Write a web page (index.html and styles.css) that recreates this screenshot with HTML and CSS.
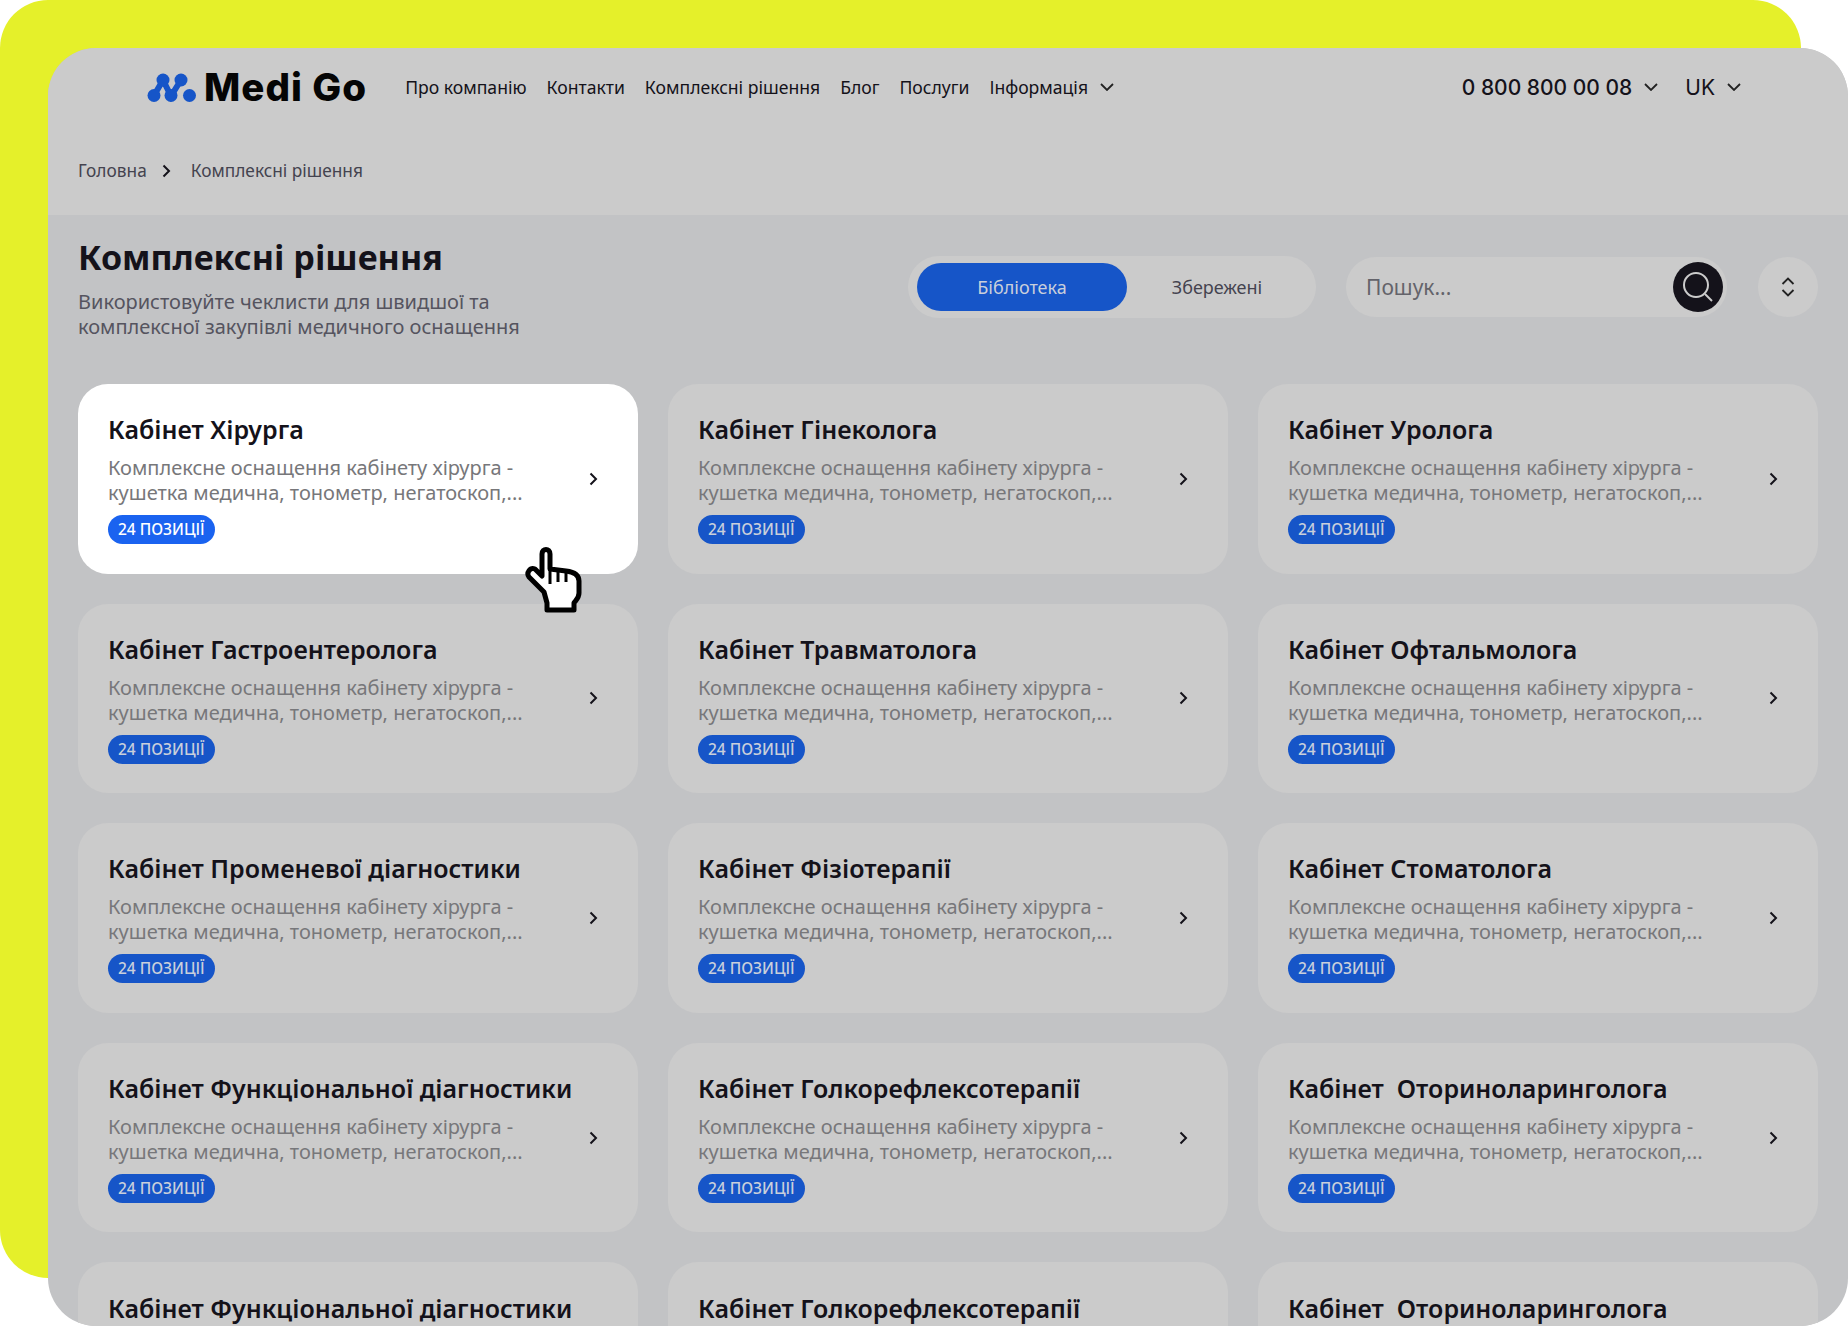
FILE: index.html
```html
<!DOCTYPE html>
<html lang="uk">
  <head>
    <meta charset="utf-8" />
    <title>Комплексні рішення</title>
    <link rel="stylesheet" href="styles.css">
  </head>
  <body>
    <div class="backdrop"></div>
    <div class="window">
      <div class="top">
        <header class="header">
          <a class="logo">
            <svg class="logo-mark" width="49" height="29" viewBox="0 0 49 29">
              <path d="M7 22.500L16 7 L24 23 L34 7" />
              <circle cx="16" cy="7" r="6.500" />
              <circle cx="7" cy="22.500" r="6.500" />
              <circle cx="24" cy="22.500" r="6.500" />
              <circle cx="34" cy="7" r="6.500" />
              <circle cx="42.500" cy="22.500" r="6.500" />
            </svg>
            <span class="logo-text">Medi Go</span>
          </a>
          <nav class="nav">
            <a>Про компанію</a>
            <a>Контакти</a>
            <a>Комплексні рішення</a>
            <a>Блог</a>
            <a>Послуги</a>
            <a class="with-arrow">Інформація
              <svg class="arrow" width="14" height="8" viewBox="0 0 14 8"><path d="M1 1l6 6 6-6" /></svg>
            </a>
          </nav>
          <div class="header-right">
            <a class="with-arrow phone">0 800 800 00 08
              <svg class="arrow" width="14" height="8" viewBox="0 0 14 8"><path d="M1 1l6 6 6-6" /></svg>
            </a>
            <a class="with-arrow lang">UK
              <svg class="arrow" width="14" height="8" viewBox="0 0 14 8"><path d="M1 1l6 6 6-6" /></svg>
            </a>
          </div>
        </header>
        <div class="crumbs">
          <a>Головна</a>
          <svg class="crumb-sep" width="9" height="14" viewBox="0 0 9 14"><path d="M1.500 1.500l5.500 5.500-5.500 5.500" /></svg>
          <a>Комплексні рішення</a>
        </div>
      </div>

      <main class="content">
        <div class="page-head">
          <div class="page-title">
            <h1>Комплексні рішення</h1>
            <p>Використовуйте чеклисти для швидшої та<br>комплексної закупівлі медичного оснащення</p>
          </div>
          <div class="tabs">
            <button class="tab active">Бібліотека</button>
            <button class="tab">Збережені</button>
          </div>
          <div class="search">
            <span class="search-text">Пошук...</span>
            <button class="search-btn">
              <svg width="32" height="32" viewBox="0 0 32 32"><circle cx="14" cy="14" r="12" /><path d="M23 23l7 7" /></svg>
            </button>
          </div>
          <button class="sort">
            <svg width="14" height="20" viewBox="0 0 14 20"><path d="M1.500 7l5.500-5.500 5.500 5.500M1.500 13l5.500 5.500 5.500-5.500" /></svg>
          </button>
        </div>

        <div class="cards" id="cards"></div>
      </main>
    </div>

    <svg class="cursor" width="58" height="66" viewBox="0 0 58 66">
      <path d="M19 45 L4 30 C1 26 5 20 10 22 L17 29 L17 7 C17 1 25 1 25 7 L25 22 L41 24 C50 25 54 28 54 34 L54 46 C54 51 51 53 49 56 L49 63 L22 63 L22 56 Z" />
      <path class="cursor-lines" d="M33 24v11M41 25v10M25 22v15" />
    </svg>

    <script src="cards.js"></script>
  </body>
</html>
```

FILE: cards.js
```js
const titles = [
  "Кабінет Хірурга",
  "Кабінет Гінеколога",
  "Кабінет Уролога",
  "Кабінет Гастроентеролога",
  "Кабінет Травматолога",
  "Кабінет Офтальмолога",
  "Кабінет Променевої діагностики",
  "Кабінет Фізіотерапії",
  "Кабінет Стоматолога",
  "Кабінет Функціональної діагностики",
  "Кабінет Голкорефлексотерапії",
  "Кабінет  Оториноларинголога",
  "Кабінет Функціональної діагностики",
  "Кабінет Голкорефлексотерапії",
  "Кабінет  Оториноларинголога",
];

const list = document.getElementById("cards");

titles.forEach(function (title, i) {
  const card = document.createElement("a");
  card.className = i === 0 ? "card hover" : "card";
  card.innerHTML = `
    <div class="card-body">
      <h3>${title}</h3>
      <p>Комплексне оснащення кабінету хірурга -<br>кушетка медична, тонометр, негатоскоп,...</p>
      <span class="badge">24 позиції</span>
    </div>
    <svg class="card-arrow" width="9" height="14" viewBox="0 0 9 14"><path d="M1.500 1.500l5.500 5.500-5.500 5.500" /></svg>`;
  list.appendChild(card);
});
```

FILE: styles.css
```css
* {
  box-sizing: border-box;
}
html, body {
  height: 100%;
}
body {
  margin: 0;
  background: #fff;
  font-family: "Noto Sans", Arial, sans-serif;
  color: #14121a;
  overflow: hidden;
  position: relative;
}
a {
  color: inherit;
  text-decoration: none;
}
button {
  font-family: inherit;
  border: none;
  padding: 0;
  background: none;
}
.backdrop {
  position: absolute;
  left: 0;
  top: 0;
  width: 1801px;
  height: 1278px;
  background: #e5f02a;
  border-radius: 48px;
}
.window {
  position: relative;
  margin: 48px 0 0 48px;
  width: 1800px;
  height: 1278px;
  background: #c2c3c5;
  border-radius: 48px;
  overflow: hidden;
}
.top {
  height: 167px;
  background: #cbcbcb;
}
.header {
  display: flex;
  align-items: center;
  height: 78px;
  padding: 0 107px 0 99px;
  font-size: 17.600px;
}
.logo {
  display: flex;
  align-items: center;
  gap: 8px;
  margin-right: 38px;
}
.logo-mark path {
  fill: none;
  stroke: #1655c8;
  stroke-width: 6;
}
.logo-mark circle {
  fill: #1655c8;
}
.logo-text {
  font-family: Inter, sans-serif;
  font-weight: 800;
  font-size: 38.500px;
  letter-spacing: 1px;
  color: #050505;
}
.nav {
  display: flex;
  align-items: center;
  gap: 20px;
  flex: 1;
}
.with-arrow {
  display: flex;
  align-items: center;
  gap: 12px;
}
.arrow path {
  fill: none;
  stroke: #222;
  stroke-width: 1.800;
}
.header-right {
  display: flex;
  align-items: center;
  gap: 27px;
  font-size: 21px;
  font-weight: 500;
  font-family: Inter, sans-serif;
}
.lang {
  font-weight: 400;
}
.crumbs {
  display: flex;
  align-items: center;
  padding: 33px 30px 0;
  font-size: 17.300px;
  color: #44434f;
}
.crumb-sep {
  margin: 0 20px 0 15px;
}
.crumb-sep path {
  fill: none;
  stroke: #14121a;
  stroke-width: 2;
}
.content {
  padding: 0 30px;
}
.page-head {
  display: flex;
  align-items: center;
  height: 169px;
  padding-bottom: 26px;
}
.page-title {
  flex: 1;
}
.page-title h1 {
  margin: 0 0 10px;
  font-size: 34px;
  line-height: 44px;
  font-weight: 700;
}
.page-title p {
  margin: 0;
  font-size: 20px;
  line-height: 25px;
  color: #55545f;
}
.tabs {
  display: flex;
  align-items: center;
  width: 408px;
  height: 62px;
  padding: 0 9px;
  border-radius: 31px;
  background: #cbcbcb;
  margin-right: 30px;
}
.tab {
  height: 48px;
  border-radius: 24px;
  font-size: 18px;
  color: #44434f;
  flex: 1;
}
.tab.active {
  flex: 0 0 210px;
  background: #1655c8;
  color: #c9cfdb;
}
.search {
  display: flex;
  align-items: center;
  justify-content: space-between;
  width: 381px;
  height: 60px;
  padding: 0 4px 0 20px;
  border-radius: 30px;
  background: #cbcbcb;
  margin-right: 31px;
}
.search-text {
  font-size: 21px;
  color: #63636a;
}
.search-btn {
  display: flex;
  align-items: center;
  justify-content: center;
  width: 50px;
  height: 50px;
  border-radius: 50%;
  background: #14121a;
}
.search-btn circle, .search-btn path {
  fill: none;
  stroke: #cbcbcb;
  stroke-width: 2;
}
.sort {
  display: flex;
  align-items: center;
  justify-content: center;
  width: 60px;
  height: 60px;
  border-radius: 50%;
  background: #cbcbcb;
}
.sort path {
  fill: none;
  stroke: #222;
  stroke-width: 1.800;
}
.cards {
  display: grid;
  grid-template-columns: repeat(3, 560px);
  grid-auto-rows: 189.600px;
  gap: 30px;
}
.card {
  display: flex;
  align-items: center;
  justify-content: space-between;
  padding: 30px 40px 30px 30px;
  border-radius: 30px;
  background: #cbcbcb;
}
.card.hover {
  background: #fff;
}
.card-body h3 {
  margin: 0 0 10px;
  font-size: 25px;
  line-height: 32px;
  font-weight: 600;
  white-space: pre;
}
.card-body p {
  margin: 0 0 10px;
  font-size: 20px;
  line-height: 25px;
  color: #77777a;
}
.badge {
  display: inline-block;
  height: 29px;
  line-height: 29px;
  padding: 0 10px;
  border-radius: 15px;
  font-size: 15.500px;
  font-weight: 500;
  text-transform: uppercase;
  color: #c9cfdb;
  background: #1655c8;
}
.card.hover .badge {
  background: #1a63f0;
  color: #fff;
}
.card-arrow path {
  fill: none;
  stroke: #14121a;
  stroke-width: 2;
}
.cursor {
  position: absolute;
  left: 525px;
  top: 547px;
}
.cursor path {
  fill: #fff;
  stroke: #000;
  stroke-width: 5;
  stroke-linejoin: round;
}
.cursor .cursor-lines {
  fill: none;
  stroke-width: 3;
}
```
